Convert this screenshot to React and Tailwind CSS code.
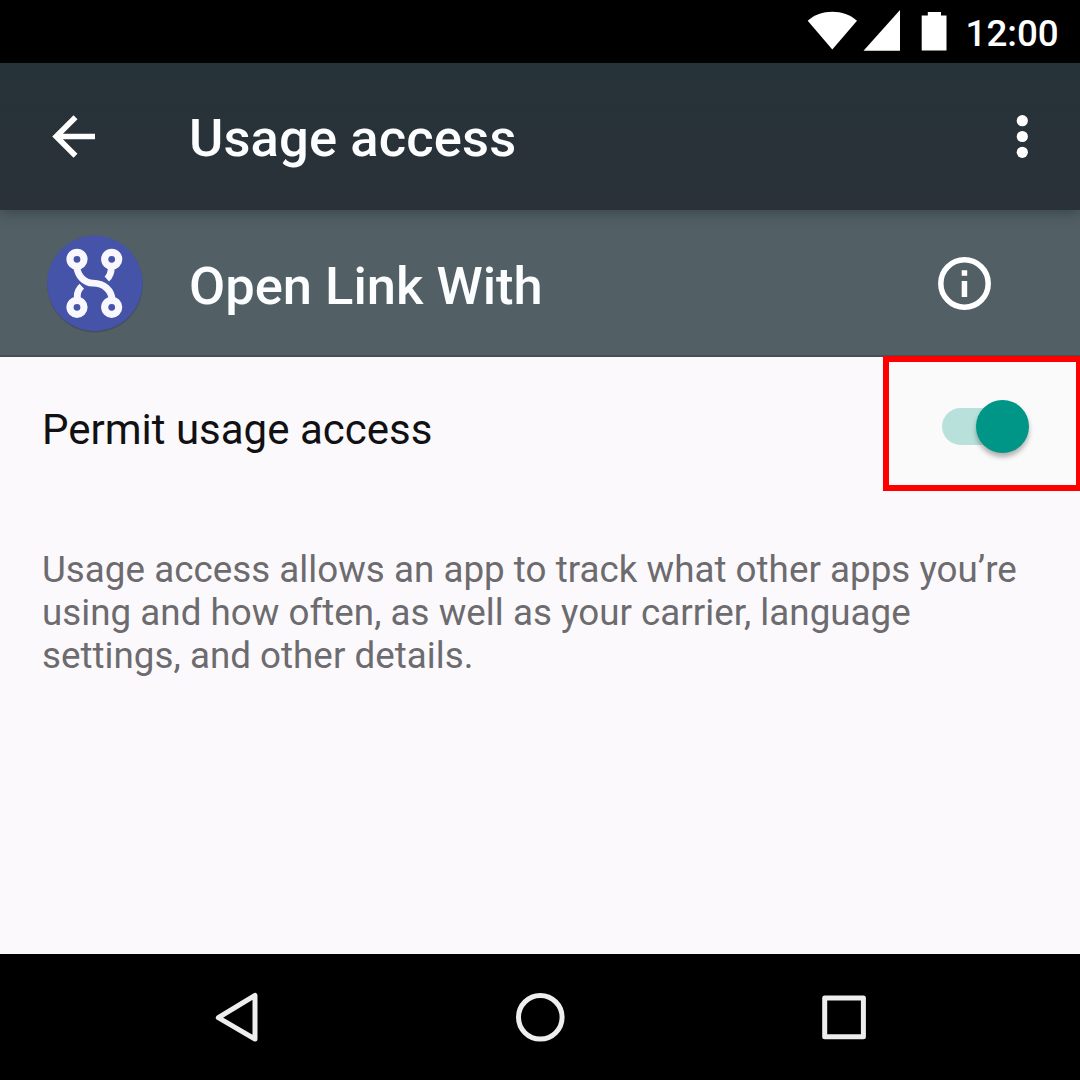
function StatusBar() {
  return (
    <div className="flex h-[63px] shrink-0 items-center bg-black pl-[807px]">
      <svg width="52" height="63" viewBox="0 0 52 63" fill="#fff">
        <path d="M.7 20.7C13.5 8.6 37 8.6 50 20.7L25.3 49.5Z" />
      </svg>
      <svg className="ml-1" width="38" height="63" viewBox="0 0 38 63" fill="#fff">
        <path d="M37 10V50.7H.5Z" />
      </svg>
      <svg className="ml-5" width="26" height="63" viewBox="0 0 26 63" fill="#fff">
        <path d="M6.8 12H20V15.5H25.5V50.5H.7V15.5H6.8Z" />
      </svg>
      <span className="ml-[18.5px] mt-[4px] text-[36.75px] leading-[44px] font-medium text-white">12:00</span>
    </div>
  );
}

function AppLogo() {
  return (
    <svg className="ml-[46px] mt-[2px]" width="98" height="100" viewBox="46 234 98 100" fill="none">
      <circle cx="95" cy="284.7" r="47.7" fill="#303d50" opacity=".45" />
      <circle cx="94.8" cy="283.3" r="47.7" fill="#4553a8" />
      <g stroke="#f7f7fd" strokeWidth="6.8">
        <path d="M76.7 267C78 276 84 283 93 283.2C104 283.5 112 290 112.3 301" />
        <path d="M111.3 267C111.3 272 110.3 276 106.8 279" />
        <path d="M77.3 301V296C77.3 292 78.6 289.2 81.8 286.3" />
      </g>
      <g fill="#4553a8" stroke="#f7f7fd" strokeWidth="7.2">
        <circle cx="77" cy="259.3" r="7" />
        <circle cx="111.7" cy="259.3" r="7" />
        <circle cx="77" cy="307.3" r="7" />
        <circle cx="111.7" cy="307.3" r="7" />
      </g>
    </svg>
  );
}

function Toolbar() {
  return (
    <header className="z-10 flex h-[147px] shrink-0 items-center bg-linear-to-b from-[#263338] to-[#2a3139] shadow-[0_3px_12px_rgba(20,35,30,0.4)]">
      <svg className="-mt-px ml-[50px]" width="46" height="48" viewBox="50 112 46 48" fill="none" stroke="#fff" strokeWidth="5.6">
        <path d="M75.5 117.2L56.2 136.5L75.5 155.8M55.5 136.5H95" />
      </svg>
      <h1 className="ml-[93px] mt-[2px] text-[52.5px] leading-[62px] font-medium tracking-[0.12px] text-[#fbfdff]">Usage access</h1>
      <svg className="-mt-px ml-auto mr-[50px]" width="16" height="48" viewBox="0 0 16 48" fill="#fff">
        <circle cx="8.3" cy="8.7" r="5.6" />
        <circle cx="8.3" cy="24.5" r="5.6" />
        <circle cx="8.3" cy="40.3" r="5.6" />
      </svg>
    </header>
  );
}

function AppRow() {
  return (
    <section className="flex h-[147px] shrink-0 items-center border-b-2 border-[#455156] bg-[#525f65]">
      <AppLogo />
      <h2 className="ml-[45px] mt-[6px] text-[52.5px] leading-[62px] font-medium text-[#fbfdff]">Open Link With</h2>
      <svg className="ml-auto mr-[88px] mt-[2px]" width="56" height="56" viewBox="0 0 56 56" fill="#fff">
        <circle cx="28.5" cy="27.5" r="23.7" fill="none" stroke="#fff" strokeWidth="5.5" />
        <path d="M25.7 14.3H31.2V19.8H25.7ZM25.7 25H31.2V41H25.7Z" />
      </svg>
    </section>
  );
}

function PermissionSwitch() {
  return (
    <div className="flex h-[135px] w-[197px] items-center border-6 border-r-4 border-[#ff0000] bg-[#fafafa] pl-[53px]">
      <div role="switch" aria-checked="true" className="mt-[6px] flex h-[37px] w-[87px] items-center justify-end rounded-full bg-linear-to-r from-[#b9e1dc] from-70% to-transparent to-70%">
        <div className="size-[53px] shrink-0 rounded-full bg-[#009687] shadow-[0_4px_5px_rgba(0,0,0,0.3)]" />
      </div>
    </div>
  );
}

function NavigationBar() {
  return (
    <nav className="flex h-[126px] shrink-0 items-center bg-black pl-[214px]">
      <svg width="46" height="52" viewBox="214 991 46 52" fill="none" stroke="#eeeeef" strokeWidth="5" strokeLinejoin="round">
        <path d="M255 995.5V1039L218.3 1017.7Z" />
      </svg>
      <svg className="ml-[254px]" width="52" height="52" viewBox="514 991 52 52" fill="none" stroke="#eeeeef" strokeWidth="5">
        <circle cx="540.3" cy="1017.3" r="21.8" />
      </svg>
      <svg className="ml-[254px]" width="48" height="52" viewBox="820 991 48 52" fill="none" stroke="#eeeeef" strokeWidth="5" strokeLinejoin="round">
        <rect x="824.7" y="998" width="38.7" height="38.7" />
      </svg>
    </nav>
  );
}

export default function App() {
  return (
    <div className="flex h-[1080px] w-[1080px] flex-col overflow-hidden bg-[#fcf9fd] font-['Roboto',sans-serif]">
      <StatusBar />
      <Toolbar />
      <AppRow />
      <main className="-mt-px flex-1">
        <div className="flex h-[136px] items-start justify-between pl-[42px]">
          <span className="mt-[49px] text-[42px] leading-[50px] text-[#111113]">Permit usage access</span>
          <PermissionSwitch />
        </div>
        <p className="mt-[56px] pl-[42px] text-[36.75px] leading-[43px] tracking-[0.02px] text-[#6c6b6e]">
          Usage access allows an app to track what other apps you’re
          <br />
          using and how often, as well as your carrier, language
          <br />
          settings, and other details.
        </p>
      </main>
      <NavigationBar />
    </div>
  );
}
